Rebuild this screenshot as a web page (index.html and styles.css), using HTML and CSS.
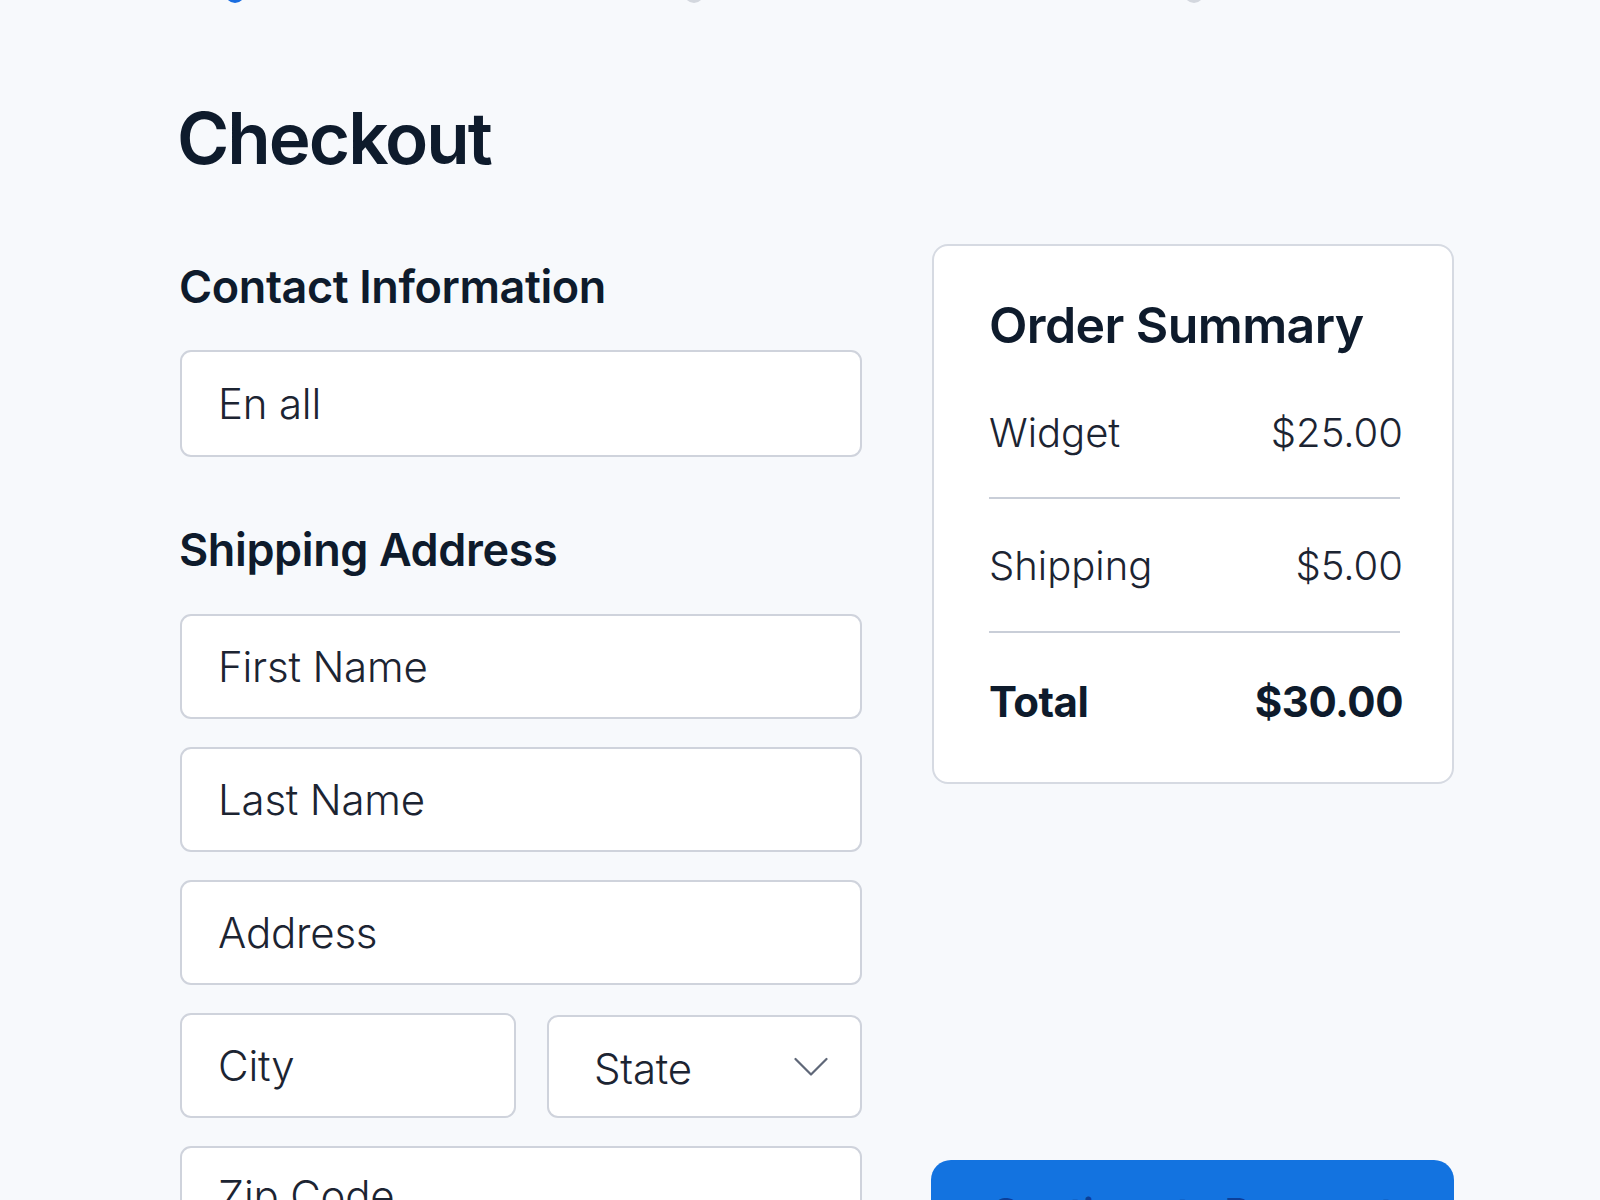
FILE: index.html
```html
<!DOCTYPE html>
<html lang="en">
<head>
<meta charset="utf-8">
<title>Checkout</title>
<link rel="stylesheet" href="styles.css">
</head>
<body>
<div class="page">
  <div class="stepper">
    <span class="step step-active"></span>
    <span class="step step-idle"></span>
    <span class="step step-idle"></span>
  </div>
  <h1 class="title">Checkout</h1>
  <div class="layout">
    <form class="form-col">
      <h2 class="section-title">Contact Information</h2>
      <div class="field field-email"><span class="placeholder">En all</span></div>
      <h2 class="section-title section-title-second">Shipping Address</h2>
      <div class="fields">
        <div class="field"><span class="placeholder">First Name</span></div>
        <div class="field"><span class="placeholder">Last Name</span></div>
        <div class="field"><span class="placeholder">Address</span></div>
        <div class="field-row">
          <div class="field"><span class="placeholder">City</span></div>
          <div class="field field-select">
            <span class="placeholder">State</span>
            <svg class="chevron" viewBox="0 0 34 20" width="34" height="20"><path d="M1.5 2 L17 17.5 L32.5 2" fill="none" stroke="#5f6778" stroke-width="2.2" stroke-linecap="round" stroke-linejoin="round"/></svg>
          </div>
        </div>
        <div class="field field-zip"><span class="placeholder">Zip Code</span></div>
      </div>
    </form>
    <aside class="side-col">
      <div class="card">
        <h2 class="card-title">Order Summary</h2>
        <div class="row row-first"><span>Widget</span><span>$25.00</span></div>
        <div class="row"><span>Shipping</span><span>$5.00</span></div>
        <div class="row row-total"><span>Total</span><span>$30.00</span></div>
      </div>
      <button class="pay-btn" type="button">Continue to Payment</button>
    </aside>
  </div>
</div>
</body>
</html>
```

FILE: styles.css
```css
html, body {
  margin: 0;
  padding: 0;
  background: #f7f9fc;
  height: 1200px;
  overflow: hidden;
}
body {
  font-family: Inter, "Noto Sans", "Liberation Sans", sans-serif;
  color: #0f1c2e;
}
.page {
  padding-left: 180px;
  width: 1274px;
}
.stepper {
  display: flex;
  height: 20px;
  margin-top: -17px;
  margin-left: 45px;
  gap: 439px;
}
.step {
  width: 20px;
  height: 20px;
  border-radius: 50%;
  flex: none;
}
.step-active { background: #1a6de0; }
.step-idle { background: #d3d7de; }
.stepper .step:nth-child(3) { margin-left: 41px; }
.title {
  margin: 92px 0 0 -3px;
  font-size: 71px;
  line-height: 86px;
  font-weight: 600;
  letter-spacing: -2px;
  color: #0e1b2c;
}
.layout {
  display: flex;
  gap: 70px;
  margin-top: 63px;
  align-items: stretch;
}
.form-col {
  width: 682px;
  flex: none;
  margin: 0;
}
.section-title {
  margin: 16px 0 36px -1px;
  font-size: 45px;
  line-height: 54px;
  font-weight: 600;
  letter-spacing: -0.4px;
  color: #0e1b2c;
}
.section-title-second {
  margin-top: 66px;
  margin-bottom: 37px;
}
.fields {
  display: flex;
  flex-direction: column;
  gap: 28px;
}
.field {
  box-sizing: border-box;
  height: 105px;
  background: #ffffff;
  border: 2px solid #cfd3dc;
  border-radius: 11px;
  display: flex;
  align-items: center;
  padding-left: 36px;
  padding-right: 30px;
}
.field-email {
  height: 107px;
}
.field-zip {
  align-items: flex-start;
  padding-top: 22px;
}
.placeholder {
  font-size: 42px;
  font-weight: 300;
  color: #1c2432;
  letter-spacing: -0.2px;
}
.field-row {
  display: grid;
  grid-template-columns: 336px 1fr;
  gap: 31px;
  align-items: end;
}
.field-select {
  height: 103px;
  justify-content: space-between;
  padding-left: 45px;
  padding-right: 32px;
}
.field-select .placeholder {
  margin-top: 4px;
}
.chevron {
  display: block;
}
.side-col {
  width: 522px;
  flex: none;
  display: flex;
  flex-direction: column;
  justify-content: space-between;
}
.card {
  box-sizing: border-box;
  background: #ffffff;
  border: 2px solid #d6dae2;
  border-radius: 16px;
  padding: 49px 49px 53px 55px;
  height: 540px;
}
.card-title {
  margin: 0;
  font-size: 50px;
  line-height: 60px;
  font-weight: 600;
  letter-spacing: -0.6px;
  color: #0e1b2c;
}
.row {
  display: flex;
  justify-content: space-between;
  font-size: 40px;
  line-height: 48px;
  font-weight: 300;
  color: #1c2432;
  padding: 43px 0 41px;
  border-bottom: 2px solid #c9ced8;
  margin-right: 3px;
}
.row > span:last-child {
  margin-right: -3px;
}
.row-first {
  padding-top: 54px;
  padding-bottom: 40px;
}
.row-total {
  border-bottom: none;
  font-size: 42px;
  line-height: 52px;
  font-weight: 700;
  letter-spacing: -0.5px;
  color: #0e1b2c;
  padding-bottom: 0;
}
.pay-btn {
  margin-top: 376px;
  height: 110px;
  border: none;
  border-radius: 20px;
  background: #1373e0;
  color: #0c3f99;
  font-family: inherit;
  font-size: 40px;
  font-weight: 600;
  padding: 28px 0 0;
  text-align: center;
  display: flex;
  justify-content: center;
  align-items: flex-start;
  margin-left: -1px;
}
```
